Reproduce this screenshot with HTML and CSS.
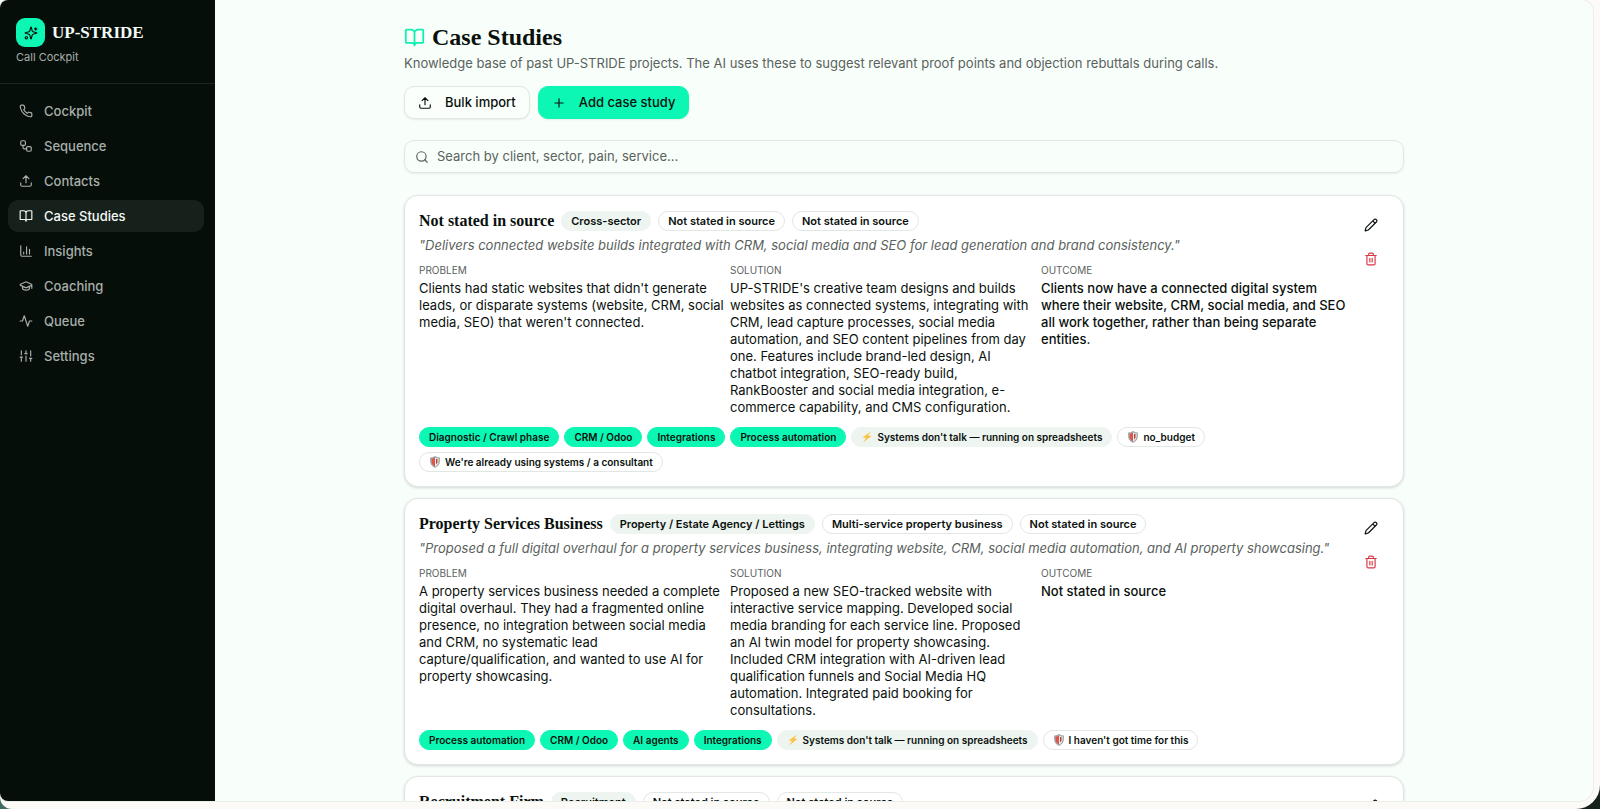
FILE: index.html
```html
<!DOCTYPE html>
<html lang="en">
<head>
<meta charset="utf-8">
<meta name="viewport" content="width=device-width, initial-scale=1">
<title>Case Studies – UP-STRIDE</title>
<link rel="stylesheet" href="styles.css">
</head>
<body>
<svg class="sprite" aria-hidden="true">
  <symbol id="phone" viewBox="0 0 24 24"><path d="M22 16.92v3a2 2 0 0 1-2.18 2 19.79 19.79 0 0 1-8.63-3.07 19.5 19.5 0 0 1-6-6 19.79 19.79 0 0 1-3.07-8.67A2 2 0 0 1 4.11 2h3a2 2 0 0 1 2 1.72c.127.96.361 1.903.7 2.81a2 2 0 0 1-.45 2.11L8.09 9.91a16 16 0 0 0 6 6l1.27-1.27a2 2 0 0 1 2.11-.45c.907.339 1.85.573 2.81.7A2 2 0 0 1 22 16.92z"/></symbol>
  <symbol id="workflow" viewBox="0 0 24 24"><rect x="3" y="3" width="8" height="8" rx="2"/><path d="M7 11v4a2 2 0 0 0 2 2h4"/><rect x="13" y="13" width="8" height="8" rx="2"/></symbol>
  <symbol id="upload" viewBox="0 0 24 24"><path d="M3 15v4a2 2 0 0 0 2 2h14a2 2 0 0 0 2-2v-4M17 8l-5-5-5 5M12 3v12"/></symbol>
  <symbol id="book" viewBox="0 0 24 24"><path d="M12 7v14M3 18a1 1 0 0 1-1-1V4a1 1 0 0 1 1-1h5a4 4 0 0 1 4 4 4 4 0 0 1 4-4h5a1 1 0 0 1 1 1v13a1 1 0 0 1-1 1h-6a3 3 0 0 0-3 3 3 3 0 0 0-3-3z"/></symbol>
  <symbol id="chart" viewBox="0 0 24 24"><path d="M3 3v16a2 2 0 0 0 2 2h16M18 17V9M13 17V5M8 17v-3"/></symbol>
  <symbol id="cap" viewBox="0 0 24 24"><path d="M21.42 10.922a1 1 0 0 0-.019-1.838L12.83 5.18a2 2 0 0 0-1.66 0L2.6 9.08a1 1 0 0 0 0 1.832l8.57 3.908a2 2 0 0 0 1.66 0zM22 10v6M6 12.5V16a6 3 0 0 0 12 0v-3.5"/></symbol>
  <symbol id="activity" viewBox="0 0 24 24"><path d="M22 12h-4l-3 9L9 3l-3 9H2"/></symbol>
  <symbol id="sliders" viewBox="0 0 24 24"><path d="M4 21v-7M4 10V3M12 21v-9M12 8V3M20 21v-5M20 12V3M2 14h4M10 8h4M18 16h4"/></symbol>
  <symbol id="sparkles" viewBox="0 0 24 24"><path d="M9.937 15.5A2 2 0 0 0 8.5 14.063l-6.135-1.582a.5.5 0 0 1 0-.962L8.5 9.936A2 2 0 0 0 9.937 8.5l1.582-6.135a.5.5 0 0 1 .963 0L14.063 8.5A2 2 0 0 0 15.5 9.937l6.135 1.581a.5.5 0 0 1 0 .964L15.5 14.063a2 2 0 0 0-1.437 1.437l-1.582 6.135a.5.5 0 0 1-.963 0zM20 3v4M22 5h-4"/><circle cx="4" cy="20" r="2"/></symbol>
  <symbol id="plus" viewBox="0 0 24 24"><path d="M5 12h14M12 5v14"/></symbol>
  <symbol id="search" viewBox="0 0 24 24"><circle cx="11" cy="11" r="8"/><path d="m21 21-4.3-4.3"/></symbol>
  <symbol id="pencil" viewBox="0 0 24 24"><path d="M21.174 6.812a1 1 0 0 0-3.986-3.987L3.842 16.174a2 2 0 0 0-.5.83l-1.321 4.352a.5.5 0 0 0 .623.622l4.353-1.32a2 2 0 0 0 .83-.497zM15 5l4 4"/></symbol>
  <symbol id="trash" viewBox="0 0 24 24"><path d="M3 6h18M19 6v14c0 1-1 2-2 2H7c-1 0-2-1-2-2V6M8 6V4c0-1 1-2 2-2h4c1 0 2 1 2 2v2M10 11v6M14 11v6"/></symbol>
  <symbol id="bolt" viewBox="0 0 24 24"><path fill="#fcc245" stroke="none" d="M20 1 3 13l7 1-6 9L21 10l-7-1z"/></symbol>
  <symbol id="shield" viewBox="0 0 24 24"><path fill="#aab4b2" stroke="#7d8785" stroke-width="1" d="M12 1c3 2 6 2.500 9 2.500v7C21 17 17 21 12 23 7 21 3 17 3 10.500v-7C6 3.500 9 3 12 1z"/><path fill="#de554c" stroke="none" d="M12 3v18c-4-2-7-5-7-10.500V5c3 0 5-.5 7-2z"/><path fill="#e9eeec" stroke="none" d="M12 3v18c4-2 7-5 7-10.500V5c-3 0-5-.5-7-2z"/><path fill="#b8443f" stroke="none" d="M14 6h3v7l-3 4z"/></symbol>
</svg>
<div class="desktop">
<div class="frame">
<div class="app">
  <aside class="sidebar">
    <div class="brand">
      <div class="brand-row"><span class="logo"><svg class="icon"><use href="#sparkles"/></svg></span><span class="brand-name">UP-STRIDE</span></div>
      <div class="brand-sub">Call Cockpit</div>
    </div>
    <nav class="nav">
      <a href="#"><svg class="icon"><use href="#phone"/></svg>Cockpit</a>
      <a href="#"><svg class="icon"><use href="#workflow"/></svg>Sequence</a>
      <a href="#"><svg class="icon"><use href="#upload"/></svg>Contacts</a>
      <a href="#" class="active" aria-current="page"><svg class="icon"><use href="#book"/></svg>Case Studies</a>
      <a href="#"><svg class="icon"><use href="#chart"/></svg>Insights</a>
      <a href="#"><svg class="icon"><use href="#cap"/></svg>Coaching</a>
      <a href="#"><svg class="icon"><use href="#activity"/></svg>Queue</a>
      <a href="#"><svg class="icon"><use href="#sliders"/></svg>Settings</a>
    </nav>
  </aside>
  <main class="main">
    <div class="container">
      <h1 class="title"><svg class="icon"><use href="#book"/></svg>Case Studies</h1>
      <p class="subtitle">Knowledge base of past UP-STRIDE projects. The AI uses these to suggest relevant proof points and objection rebuttals during calls.</p>
      <div class="actions">
        <button class="btn" type="button"><svg class="icon"><use href="#upload"/></svg>Bulk import</button>
        <button class="btn primary" type="button"><svg class="icon"><use href="#plus"/></svg>Add case study</button>
      </div>
      <label class="search"><svg class="icon"><use href="#search"/></svg><input type="search" aria-label="Search case studies" placeholder="Search by client, sector, pain, service..."></label>

      <div class="cards">
      <article class="card">
        <div class="card-body">
          <div class="card-head"><h2>Not stated in source</h2><span class="badge muted">Cross-sector</span><span class="badge">Not stated in source</span><span class="badge">Not stated in source</span></div>
          <p class="quote">"Delivers connected website builds integrated with CRM, social media and SEO for lead generation and brand consistency."</p>
          <div class="columns">
            <section><h3>Problem</h3><p>Clients had static websites that didn't generate leads, or disparate systems (website, CRM, social media, SEO) that weren't connected.</p></section>
            <section><h3>Solution</h3><p>UP-STRIDE's creative team designs and builds websites as connected systems, integrating with CRM, lead capture processes, social media automation, and SEO content pipelines from day one. Features include brand-led design, AI chatbot integration, SEO-ready build, RankBooster and social media integration, e-commerce capability, and CMS configuration.</p></section>
            <section class="outcome"><h3>Outcome</h3><p>Clients now have a connected digital system where their website, CRM, social media, and SEO all work together, rather than being separate entities.</p></section>
          </div>
          <div class="tags">
            <span class="tag service">Diagnostic / Crawl phase</span><span class="tag service">CRM / Odoo</span><span class="tag service">Integrations</span><span class="tag service">Process automation</span>
            <span class="tag muted"><svg class="icon"><use href="#bolt"/></svg>Systems don't talk — running on spreadsheets</span>
            <span class="tag"><svg class="icon"><use href="#shield"/></svg>no_budget</span>
            <span class="tag"><svg class="icon"><use href="#shield"/></svg>We're already using systems / a consultant</span>
          </div>
        </div>
        <div class="card-actions"><button type="button" aria-label="Edit"><svg class="icon"><use href="#pencil"/></svg></button><button type="button" class="danger" aria-label="Delete"><svg class="icon"><use href="#trash"/></svg></button></div>
      </article>

      <article class="card">
        <div class="card-body">
          <div class="card-head"><h2>Property Services Business</h2><span class="badge muted">Property / Estate Agency / Lettings</span><span class="badge">Multi-service property business</span><span class="badge">Not stated in source</span></div>
          <p class="quote">"Proposed a full digital overhaul for a property services business, integrating website, CRM, social media automation, and AI property showcasing."</p>
          <div class="columns">
            <section><h3>Problem</h3><p>A property services business needed a complete digital overhaul. They had a fragmented online presence, no integration between social media and CRM, no systematic lead capture/qualification, and wanted to use AI for property showcasing.</p></section>
            <section><h3>Solution</h3><p>Proposed a new SEO-tracked website with interactive service mapping. Developed social media branding for each service line. Proposed an AI twin model for property showcasing. Included CRM integration with AI-driven lead qualification funnels and Social Media HQ automation. Integrated paid booking for consultations.</p></section>
            <section class="outcome"><h3>Outcome</h3><p>Not stated in source</p></section>
          </div>
          <div class="tags">
            <span class="tag service">Process automation</span><span class="tag service">CRM / Odoo</span><span class="tag service">AI agents</span><span class="tag service">Integrations</span>
            <span class="tag muted"><svg class="icon"><use href="#bolt"/></svg>Systems don't talk — running on spreadsheets</span>
            <span class="tag"><svg class="icon"><use href="#shield"/></svg>I haven't got time for this</span>
          </div>
        </div>
        <div class="card-actions"><button type="button" aria-label="Edit"><svg class="icon"><use href="#pencil"/></svg></button><button type="button" class="danger" aria-label="Delete"><svg class="icon"><use href="#trash"/></svg></button></div>
      </article>

      <article class="card">
        <div class="card-body">
          <div class="card-head"><h2>Recruitment Firm</h2><span class="badge muted">Recruitment</span><span class="badge">Not stated in source</span><span class="badge">Not stated in source</span></div>
        </div>
        <div class="card-actions"><button type="button" aria-label="Edit"><svg class="icon"><use href="#pencil"/></svg></button></div>
      </article>
      </div>
    </div>
  </main>
</div>
</div>
</div>
</body>
</html>
```
FILE: styles.css
```css
* { box-sizing: border-box; }
body, h1, h2, h3, p { margin: 0; }
body {
  font-family: Inter, sans-serif;
  font-size: 13px;
  line-height: 17px;
  color: #0a110d;
}
button, input { font: inherit; color: inherit; }
.sprite { display: none; }
.icon {
  width: 14px;
  height: 14px;
  flex: none;
  fill: none;
  stroke: currentColor;
  stroke-width: 2;
  stroke-linecap: round;
  stroke-linejoin: round;
}

.desktop { height: 100vh; background: linear-gradient(90deg, #3f6b62, #16211c); }
.frame {
  height: 100%;
  padding: 0 7px 8px 0;
  background: #fcfaf7;
  border-radius: 0 0 24px 12px;
}
.app {
  display: flex;
  height: 100%;
  overflow: hidden;
  border-radius: 8px 12px 14px 8px;
  background: #f8fefa;
  box-shadow: 0 0 0 1px #eceeea;
}

.sidebar { width: 215px; flex: none; background: #060e09; color: #a9afab; }
.brand { padding: 18px 16px; border-bottom: 1px solid #1d2721; }
.brand-row { display: flex; align-items: center; gap: 7px; }
.logo {
  display: grid;
  place-items: center;
  width: 29px;
  height: 29px;
  border-radius: 9px;
  background: #0cf7b4;
  color: #060e09;
}
.brand-name { font: bold 17px/24px "Liberation Serif", serif; color: #f4faf6; }
.brand-sub { margin-top: 3px; font-size: 11px; line-height: 15px; }
.nav { display: flex; flex-direction: column; gap: 3px; padding: 11px 11px 11px 8px; }
.nav a {
  display: flex;
  align-items: center;
  gap: 11px;
  height: 32px;
  padding: 0 11px;
  border-radius: 10px;
  color: inherit;
  text-decoration: none;
  font-weight: 500;
}
.nav .active { background: #17211c; color: #f4faf6; }

.main { flex: 1; min-width: 0; overflow: hidden; padding: 23px 28px; }
.container { max-width: 1000px; margin: 0 auto; }
.title {
  display: flex;
  align-items: center;
  gap: 7px;
  font: bold 24px/28px "Liberation Serif", serif;
}
.title .icon { width: 21px; height: 21px; color: #0cf0b0; }
.subtitle { margin-top: 3px; line-height: 18px; color: #5a625d; }
.actions { display: flex; gap: 8px; margin-top: 14px; }
.btn {
  display: flex;
  align-items: center;
  gap: 13px;
  height: 33px;
  padding: 0 13px;
  border: 1px solid #e1e7e3;
  border-radius: 10px;
  background: #fafffc;
  font-weight: 500;
  box-shadow: 0 1px 2px #00000014;
}
.btn.primary { background: #0cf7b4; border-color: #0cf7b4; }
.search {
  display: flex;
  align-items: center;
  gap: 8px;
  height: 33px;
  margin-top: 21px;
  padding: 0 10px;
  border: 1px solid #e1e7e3;
  border-radius: 10px;
  box-shadow: 0 1px 2px #00000014;
  color: #5a625d;
}
.search input { flex: 1; border: 0; padding: 0; outline: 0; background: none; }
.search input::placeholder { color: #5a625d; opacity: 1; }

.cards { display: flex; flex-direction: column; gap: 11px; margin-top: 22px; }
.card {
  display: flex;
  gap: 6px;
  padding: 14px;
  border: 1px solid #e1e7e3;
  border-radius: 14px;
  background: #fff;
  box-shadow: 0 1px 3px #00000026;
}
.card-body { flex: 1; min-width: 0; }
.card-head { display: flex; align-items: center; gap: 7px; min-height: 22px; }
.card-head h2 { font: bold 16px/22px "Liberation Serif", serif; }
.badge, .tag {
  display: flex;
  align-items: center;
  height: 20px;
  padding: 0 9px;
  border: 1px solid #e1e7e3;
  border-radius: 10px;
  font-size: 11px;
  font-weight: 600;
  white-space: nowrap;
}
.tag { gap: 4px; font-size: 10px; }
.tag .icon { width: 12px; height: 12px; }
.muted { background: #eef4f0; border-color: #eef4f0; }
.service { background: #0cf7b4; border-color: #0cf7b4; }
.quote { margin-top: 4px; line-height: 18px; font-style: italic; color: #5a625d; }
.columns { display: grid; grid-template-columns: repeat(3, 1fr); gap: 6px; margin-top: 9px; }
.columns h3 {
  margin-bottom: 3px;
  font-size: 10px;
  line-height: 14px;
  font-weight: 400;
  text-transform: uppercase;
  color: #5a625d;
}
.outcome p { font-weight: 500; }
.tags { display: flex; flex-wrap: wrap; gap: 5px; margin-top: 11px; }
.card-actions { display: flex; flex-direction: column; gap: 4px; }
.card-actions button {
  display: grid;
  place-items: center;
  width: 37px;
  height: 30px;
  padding: 0;
  border: 0;
  background: none;
}
.card-actions .danger { color: #dc3545; }
```
